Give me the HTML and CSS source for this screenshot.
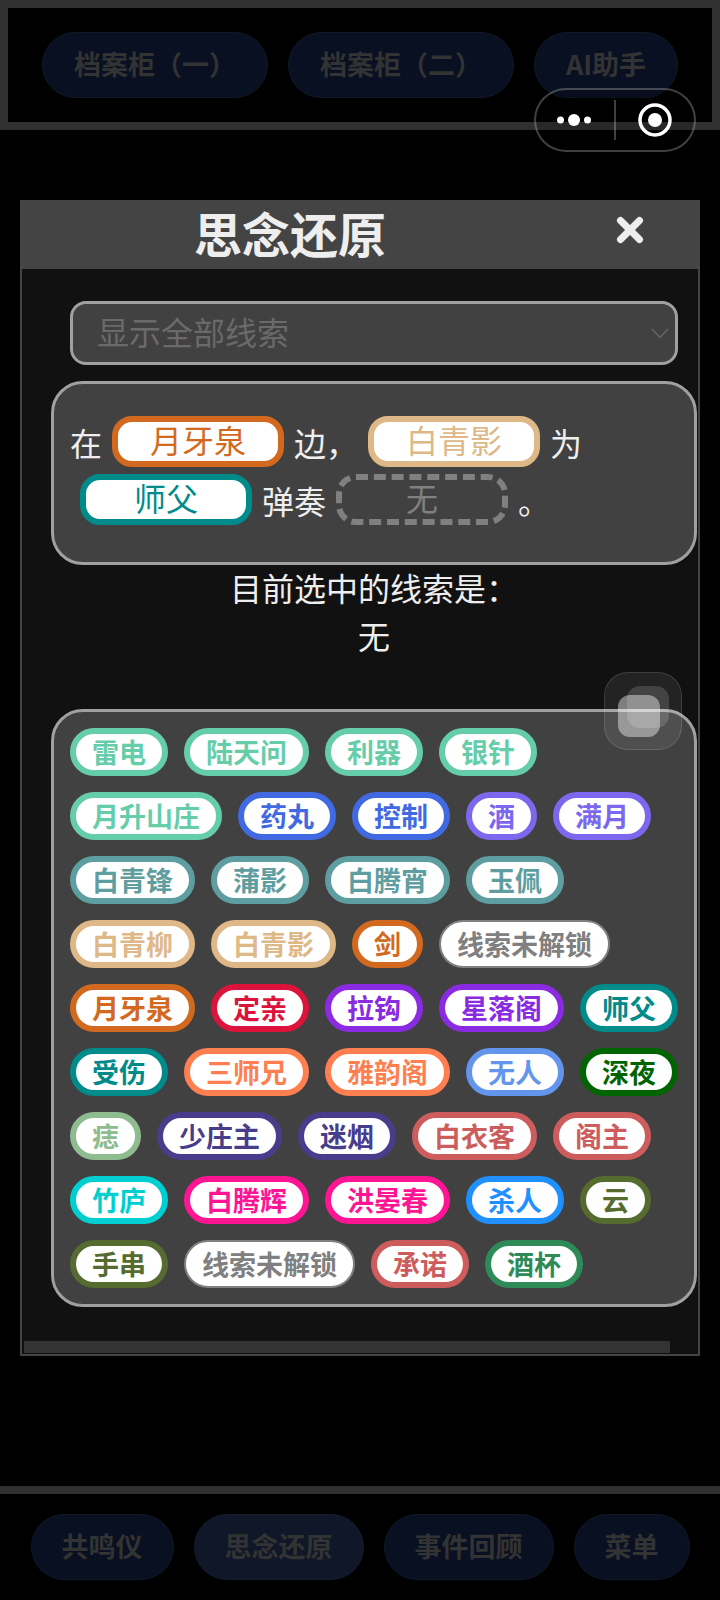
FILE: index.html
```
<!DOCTYPE html>
<html lang="zh-CN">
<head>
    <meta charset="UTF-8">
    <meta name="viewport" content="width=device-width, initial-scale=1.0">
    <title>思念还原</title>
    <link rel="stylesheet" href="styles.css">
</head>
<body>
    <!-- 顶部导航 -->
    <nav class="top-bar">
        <button class="nav-btn">档案柜（一）</button>
        <button class="nav-btn">档案柜（二）</button>
        <button class="nav-btn">AI助手</button>
    </nav>

    <!-- 弹窗 -->
    <main class="modal">
        <header class="modal-header">
            <h1>思念还原</h1>
            <button class="close-btn" aria-label="关闭">
                <svg width="28" height="28" viewBox="0 0 28 28">
                    <path d="M4.500 4.500L23.500 23.500M23.500 4.500L4.500 23.500" stroke="#eee" stroke-width="7" stroke-linecap="round"/>
                </svg>
            </button>
        </header>

        <div class="modal-body">
            <div class="filter">
                <select aria-label="线索筛选">
                    <option>显示全部线索</option>
                </select>
                <svg class="arrow" width="18" height="12" viewBox="0 0 18 12">
                    <path d="M1 1L9 9.500L17 1" fill="none" stroke="#666" stroke-width="1.500"/>
                </svg>
            </div>

            <p class="panel sentence">在<button class="slot chocolate">月牙泉</button>边，<button class="slot burlywood">白青影</button>为<button class="slot darkcyan">师父</button>弹奏<button class="slot empty">无</button>。</p>

            <p class="selected">目前选中的线索是：<br>无</p>

            <div class="panel clues">
                <button class="clue aquamarine">雷电</button>
                <button class="clue aquamarine">陆天问</button>
                <button class="clue aquamarine">利器</button>
                <button class="clue aquamarine">银针</button>
                <button class="clue aquamarine">月升山庄</button>
                <button class="clue royalblue">药丸</button>
                <button class="clue royalblue">控制</button>
                <button class="clue slateblue">酒</button>
                <button class="clue slateblue">满月</button>
                <button class="clue cadetblue">白青锋</button>
                <button class="clue cadetblue">蒲影</button>
                <button class="clue cadetblue">白腾宵</button>
                <button class="clue cadetblue">玉佩</button>
                <button class="clue burlywood">白青柳</button>
                <button class="clue burlywood">白青影</button>
                <button class="clue chocolate">剑</button>
                <button class="clue locked">线索未解锁</button>
                <button class="clue chocolate">月牙泉</button>
                <button class="clue crimson">定亲</button>
                <button class="clue blueviolet">拉钩</button>
                <button class="clue blueviolet">星落阁</button>
                <button class="clue darkcyan">师父</button>
                <button class="clue darkcyan">受伤</button>
                <button class="clue coral">三师兄</button>
                <button class="clue coral">雅韵阁</button>
                <button class="clue cornflower">无人</button>
                <button class="clue darkgreen">深夜</button>
                <button class="clue seagreen-light">痣</button>
                <button class="clue darkslate">少庄主</button>
                <button class="clue darkslate">迷烟</button>
                <button class="clue indianred">白衣客</button>
                <button class="clue indianred">阁主</button>
                <button class="clue turquoise">竹庐</button>
                <button class="clue deeppink">白腾辉</button>
                <button class="clue deeppink">洪晏春</button>
                <button class="clue dodgerblue">杀人</button>
                <button class="clue olive">云</button>
                <button class="clue olive">手串</button>
                <button class="clue locked">线索未解锁</button>
                <button class="clue indianred">承诺</button>
                <button class="clue seagreen">酒杯</button>
            </div>
        </div>

        <div class="scroll-track"><div class="scroll-thumb"></div></div>
    </main>

    <!-- 底部导航 -->
    <nav class="bottom-bar">
        <button class="nav-btn">共鸣仪</button>
        <button class="nav-btn active">思念还原</button>
        <button class="nav-btn">事件回顾</button>
        <button class="nav-btn">菜单</button>
    </nav>

    <!-- 小程序胶囊按钮 -->
    <div class="capsule">
        <button aria-label="更多">
            <svg width="36" height="14" viewBox="0 0 36 14" fill="#fff">
                <circle cx="3.500" cy="7" r="3.500"/>
                <circle cx="17" cy="7" r="6"/>
                <circle cx="30.500" cy="7" r="3.500"/>
            </svg>
        </button>
        <span class="divider"></span>
        <button aria-label="关闭小程序">
            <svg width="34" height="34" viewBox="0 0 34 34">
                <circle cx="17" cy="17" r="15" fill="none" stroke="#fff" stroke-width="3.500"/>
                <circle cx="17" cy="17" r="7" fill="#fff"/>
            </svg>
        </button>
    </div>

    <!-- 悬浮球 -->
    <button class="float-ball" aria-label="悬浮球">
        <svg width="76" height="76" viewBox="0 0 76 76" fill="#fff">
            <rect x="22" y="13" width="42" height="42" rx="13" fill-opacity="0.15"/>
            <rect x="13" y="22" width="42" height="42" rx="12" fill-opacity="0.42"/>
        </svg>
    </button>
</body>
</html>
```

FILE: styles.css
```
* {
    box-sizing: border-box;
}

body {
    margin: 0;
    min-height: 100vh;
    position: relative;
    display: flex;
    flex-direction: column;
    background: #010101;
    color: #eee;
    font-family: "Noto Sans CJK SC", sans-serif;
    font-size: 32px;
}

button {
    font-family: inherit;
    cursor: pointer;
}

/* 导航 */
.top-bar, .bottom-bar {
    display: flex;
    justify-content: center;
    gap: 20px;
    background: #000;
}

.top-bar {
    border: 8px solid #303030;
    padding: 24px 0;
}

.bottom-bar {
    margin-top: auto;
    border-top: 8px solid #303030;
    padding: 20px 0;
}

.nav-btn {
    height: 66px;
    padding: 0 30px 2px;
    border: 1px solid #101826;
    border-radius: 33px;
    background: #091021;
    color: #333;
    font-size: 27px;
    font-weight: bold;
    line-height: 40px;
    white-space: nowrap;
}

.top-bar .nav-btn {
    padding: 0 31px 2px;
}

.nav-btn.active {
    background: #101728;
    border-color: #151d2d;
}

/* 弹窗 */
.modal {
    margin: 70px 20px 0;
    border: 2px solid #444;
    background: #111;
}

.modal-header {
    display: flex;
    align-items: flex-start;
    height: 67px;
    background: #444;
}

.modal-header h1 {
    flex: 1;
    margin: 0;
    padding-right: 4px;
    text-align: center;
    font-size: 48px;
    line-height: 60px;
}

.close-btn {
    width: 136px;
    height: 56px;
    padding: 0;
    border: none;
    background: none;
}

.close-btn svg {
    display: block;
    margin: 0 auto;
}

.modal-body {
    padding: 32px 1px 34px 29px;
}

.filter {
    position: relative;
    margin: 0 19px 16px;
}

.filter select {
    display: block;
    appearance: none;
    width: 100%;
    height: 64px;
    padding: 0 24px 4px;
    border: 3px solid #a0a0a0;
    border-radius: 16px;
    background: #414141;
    color: #6a6a6a;
    font-family: inherit;
    font-size: 32px;
}

.arrow {
    position: absolute;
    right: 9px;
    top: 27px;
    pointer-events: none;
}

.panel {
    margin: 0;
    border: 3px solid #a0a0a0;
    border-radius: 32px;
    background: #414141;
}

.sentence {
    padding: 29px 16px 33px;
    line-height: 58px;
}

.slot {
    width: 172px;
    height: 51px;
    margin: 0 10px;
    padding: 0 0 4px;
    border: 6px solid;
    border-radius: 20px;
    background: #fff;
    font-size: 32px;
    line-height: 32px;
    vertical-align: 3px;
}

.slot.empty {
    border-style: dashed;
    background: none;
    color: #808080;
}

.selected {
    margin: -2px 0 50px;
    text-align: center;
    line-height: 48px;
}

.clues {
    display: flex;
    flex-wrap: wrap;
    gap: 16px;
    padding: 16px;
}

.clue {
    height: 48px;
    padding: 0 16px;
    border: 6px solid;
    border-radius: 24px;
    background: #fff;
    font-size: 27px;
    font-weight: bold;
    line-height: 34px;
    white-space: nowrap;
}

.clue.locked {
    border-width: 2px;
}

/* 线索颜色 */
.aquamarine { color: mediumaquamarine; }
.royalblue { color: royalblue; }
.slateblue { color: mediumslateblue; }
.cadetblue { color: cadetblue; }
.burlywood { color: burlywood; }
.chocolate { color: chocolate; }
.crimson { color: crimson; }
.blueviolet { color: blueviolet; }
.darkcyan { color: darkcyan; }
.coral { color: coral; }
.cornflower { color: cornflowerblue; }
.darkgreen { color: darkgreen; }
.seagreen-light { color: darkseagreen; }
.darkslate { color: darkslateblue; }
.indianred { color: indianred; }
.turquoise { color: darkturquoise; }
.deeppink { color: deeppink; }
.dodgerblue { color: dodgerblue; }
.olive { color: darkolivegreen; }
.seagreen { color: seagreen; }
.locked { color: gray; }

/* 横向滚动条 */
.scroll-track {
    padding: 0 28px 1px 2px;
}

.scroll-thumb {
    height: 12px;
    background: #333;
}

/* 悬浮元素 */
.capsule {
    position: absolute;
    top: 88px;
    right: 24px;
    display: flex;
    align-items: center;
    width: 162px;
    height: 64px;
    border: 2px solid rgba(255, 255, 255, 0.25);
    border-radius: 32px;
    background: rgba(0, 0, 0, 0.15);
}

.capsule button {
    flex: 1;
    display: flex;
    justify-content: center;
    padding: 0;
    border: none;
    background: none;
}

.divider {
    width: 2px;
    height: 40px;
    background: rgba(255, 255, 255, 0.25);
}

.float-ball {
    position: absolute;
    top: 672px;
    right: 38px;
    padding: 0;
    border: 1px solid rgba(255, 255, 255, 0.12);
    border-radius: 24px;
    background: rgba(255, 255, 255, 0.08);
}

.float-ball svg {
    display: block;
}
```
